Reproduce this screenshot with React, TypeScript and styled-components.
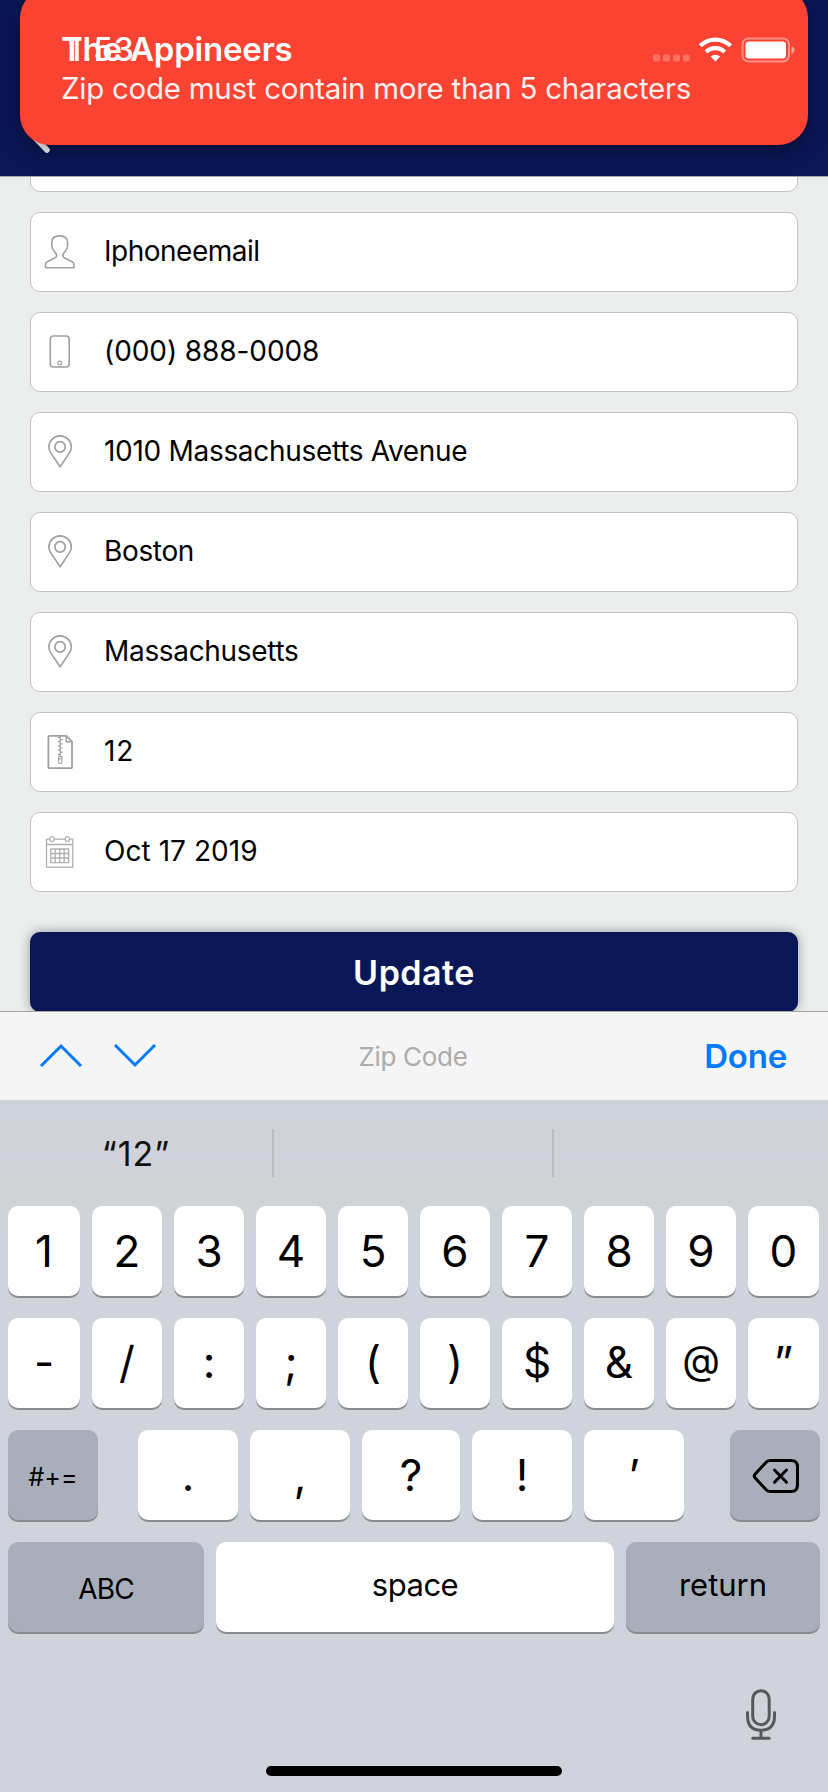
import React from "react";
import styled, { createGlobalStyle } from "styled-components";

const GlobalStyle = createGlobalStyle`
  *, *::before, *::after { box-sizing: border-box; }
  html, body { margin: 0; padding: 0; }
  body { background: #ebeeed; }
`;

const Screen = styled.div`
  position: relative;
  display: flex;
  flex-direction: column;
  width: 828px;
  height: 1792px;
  overflow: hidden;
  background: #ebeeed;
  color: #000;
  font-family: Inter, "Liberation Sans", sans-serif;
`;

/* ---------- Header, toast and status bar ---------- */

const NavBar = styled.header`
  flex: none;
  display: flex;
  align-items: flex-end;
  height: 177px;
  padding: 0 0 20px 24px;
  background: #0a1757;
  border-bottom: 1px solid #a3a6ad;
`;

const Toast = styled.div`
  position: absolute;
  top: -12px;
  left: 20px;
  width: 788px;
  height: 157px;
  padding: 41px 41px 0;
  border-radius: 30px;
  background: #fa4332;
  color: #fff;
  box-shadow: 0 6px 20px rgba(0, 0, 0, 0.4);
`;

const ToastTitle = styled.div`
  font-size: 33px;
  line-height: 40px;
  font-weight: 600;
  letter-spacing: -0.2px;
  white-space: nowrap;
`;

const ToastMessage = styled.div`
  font-size: 29.5px;
  line-height: 38px;
  letter-spacing: -0.27px;
  white-space: nowrap;
  opacity: 0.92;
`;

const StatusBar = styled.div`
  position: absolute;
  top: 0;
  left: 0;
  right: 0;
  display: flex;
  align-items: center;
  justify-content: space-between;
  height: 99px;
  padding: 0 32px 0 68px;
  color: #fff;
`;

const Clock = styled.span`
  font-size: 32px;
  font-weight: 500;
  letter-spacing: 1px;
`;

/* ---------- Form ---------- */

const Form = styled.main`
  flex: none;
  display: flex;
  flex-direction: column;
  gap: 20px;
  height: 834px;
  padding: 0 30px;
  overflow: hidden;
`;

const Field = styled.div<{ $clipped?: boolean }>`
  flex: none;
  display: flex;
  align-items: center;
  height: 80px;
  margin-top: ${(p) => (p.$clipped ? "-65px" : "0")};
  padding-left: 9px;
  background: #fff;
  border: 1px solid #c2c4c4;
  border-radius: 10px;
`;

const FieldIcon = styled.svg`
  flex: none;
  width: 40px;
  height: 40px;
  fill: none;
  stroke: #a0a0a0;
  stroke-width: 1.6;
  stroke-linejoin: round;
`;

const FieldValue = styled.span<{ $tracking: number }>`
  padding: 0 0 2px 24px;
  font-size: 28px;
  line-height: 40px;
  letter-spacing: ${(p) => p.$tracking}px;
  white-space: nowrap;
`;

const UpdateButton = styled.button`
  flex: none;
  height: 80px;
  margin: 20px 0 0;
  padding: 0;
  border: 0;
  border-radius: 10px;
  background: #0a1757;
  color: #fff;
  font-family: inherit;
  font-size: 34px;
  font-weight: 600;
  letter-spacing: 0.5px;
  box-shadow: 0 0 12px rgba(0, 0, 0, 0.36);
`;

/* ---------- Keyboard accessory ---------- */

const Accessory = styled.div`
  flex: none;
  display: grid;
  grid-template-columns: 1fr auto 1fr;
  align-items: center;
  height: 89px;
  padding: 0 41px 0 39px;
  background: #f5f5f5;
  border-top: 1px solid #a0a2a2;
`;

const Arrows = styled.div`
  display: flex;
  gap: 30px;
`;

const AccessoryTitle = styled.span`
  font-size: 26px;
  letter-spacing: -0.3px;
  color: #acacac;
`;

const DoneButton = styled.span`
  justify-self: end;
  font-size: 33px;
  font-weight: 600;
  letter-spacing: -0.2px;
  color: #007aff;
`;

/* ---------- Keyboard ---------- */

const Keyboard = styled.section`
  flex: 1;
  display: flex;
  flex-direction: column;
  background: linear-gradient(
    #ced2da 0, #ced2da 20px, #cfd3d7 34px, #cfd2da 50px, #cfd2da 66px,
    #cfd3d6 84px, #cfd3d6 102px, #d0d3db 130px, #d0d3db 740px
  );
`;

const Suggestions = styled.div`
  display: grid;
  grid-template-columns: 272px 280px 276px;
  align-items: center;
  height: 106px;
  font-size: 34px;
  color: #111;
`;

const Suggestion = styled.div<{ $divided?: boolean }>`
  display: flex;
  align-items: center;
  justify-content: center;
  height: 48px;
  letter-spacing: 1px;
  border-left: ${(p) => (p.$divided ? "2px solid #b7babf" : "0")};
`;

const KeyRow = styled.div<{ $columns: string }>`
  display: grid;
  grid-template-columns: ${(p) => p.$columns};
  column-gap: 12px;
  height: 90px;
  margin: 0 0 22px 8px;
`;

const Key = styled.div<{
  $size?: number;
  $dark?: boolean;
  $lift?: number;
  $drop?: number;
  $column?: number;
  $tracking?: number;
}>`
  display: flex;
  align-items: center;
  justify-content: center;
  grid-column: ${(p) => p.$column ?? "auto"};
  padding-top: ${(p) => p.$drop ?? 0}px;
  padding-bottom: ${(p) => p.$lift ?? 0}px;
  border-radius: 10px;
  background: ${(p) => (p.$dark ? "#a9afba" : "#fff")};
  box-shadow: 0 2px 0 #898b8f;
  font-size: ${(p) => p.$size ?? 44}px;
  letter-spacing: ${(p) => p.$tracking ?? 0}px;
  line-height: 1;
`;

const Dictation = styled.div`
  display: flex;
  justify-content: flex-end;
  padding: 35px 50px 0 0;
`;

const HomeIndicator = styled.div`
  width: 296px;
  height: 10px;
  margin: 25px auto 0;
  border-radius: 5px;
  background: #000;
`;

/* ---------- Icons ---------- */

const PersonIcon = () => (
  <FieldIcon viewBox="0 0 40 40">
    <path d="M19.7 3.9C14.4 3.9 11.8 6.4 11.8 10.4V14.2C11.8 17.6 15.2 20 16.3 22.1C17 23.7 16.3 25.2 14.8 26L7.2 29.8C6 30.5 5.5 31.3 5.5 32.4V35.7H33.9V32.4C33.9 31.3 33.4 30.5 32.2 29.8L24.6 26C23.1 25.2 22.4 23.7 23.1 22.1C24.2 20 27.6 17.6 27.6 14.2V10.4C27.6 6.4 25 3.9 19.7 3.9Z" />
  </FieldIcon>
);

const PhoneIcon = () => (
  <FieldIcon viewBox="0 0 40 40">
    <rect x="10.3" y="4" width="18.9" height="31" rx="3" />
    <circle cx="19.7" cy="31" r="1.9" strokeWidth="1.2" />
  </FieldIcon>
);

const PinIcon = () => (
  <FieldIcon viewBox="0 0 40 40">
    <path d="M20.1 34.8L10.6 20.6C9.4 18.7 8.9 17 8.9 15.1A11.2 11.2 0 0 1 31.3 15.1C31.3 17 30.8 18.7 29.6 20.6Z" />
    <circle cx="20.1" cy="14.9" r="5.2" strokeWidth="1.7" />
  </FieldIcon>
);

const ZipIcon = () => (
  <FieldIcon viewBox="0 0 40 40">
    <path d="M26.4 3.8H9.4Q8.4 3.8 8.4 4.8V35.2Q8.4 36.2 9.4 36.2H31Q32 36.2 32 35.2V9.6Z" strokeWidth="1.8" />
    <path d="M26.2 4V9.8H31.8" strokeWidth="1.4" />
    <path d="M20.2 4V25M17.8 5.5H20.2M20.2 7.6H22.7M17.8 9.7H20.2M20.2 11.8H22.7M17.8 13.9H20.2M20.2 16H22.7M17.8 18.1H20.2M20.2 20.2H22.7M17.8 22.3H20.2" strokeWidth="1.2" />
    <path d="M18.6 24.2H21.8V30.2Q21.8 31.5 20.2 31.5Q18.6 31.5 18.6 30.2ZM18.6 26.8H21.8" strokeWidth="1.1" />
  </FieldIcon>
);

const CalendarIcon = () => (
  <FieldIcon viewBox="0 0 40 40">
    <g stroke="#b0b0b0" strokeWidth="1.3">
      <path d="M10 7.1H6.5V35.2H32.8V7.1H29.4M14 7.1H25.4M6.5 12.5H32.8" />
      <rect x="10" y="4.8" width="4" height="4.6" rx="1.3" />
      <rect x="25.4" y="4.8" width="4" height="4.6" rx="1.3" />
      <path d="M10.8 17H28.7V30.7H10.8ZM10.8 21.5H28.7M10.8 26H28.7M15.2 17V30.7M19.7 17V30.7M24.2 17V30.7" />
    </g>
  </FieldIcon>
);

const BackIcon = () => (
  <svg width="30" height="46" viewBox="0 0 30 46" fill="none" stroke="#fff" strokeWidth="5.5" strokeLinecap="round" strokeLinejoin="round">
    <path d="M23 7L7 23.5L23 40" />
  </svg>
);

const StatusIcons = () => (
  <svg width="143" height="26" viewBox="0 0 143 26" fill="none">
    <g fill="#fff" fillOpacity="0.25">
      <rect x="0" y="17.5" width="7" height="7" rx="2" />
      <rect x="10" y="17.5" width="7" height="7" rx="2" />
      <rect x="20" y="17.5" width="7" height="7" rx="2" />
      <rect x="30" y="17.5" width="7" height="7" rx="2" />
    </g>
    <g stroke="#fff" strokeWidth="4.3">
      <path d="M47.2 8.7A21.8 21.8 0 0 1 77.6 8.7" />
      <path d="M53.1 15A13.3 13.3 0 0 1 71.7 15" />
    </g>
    <path d="M62.4 24.5L57.6 19.6A6.9 6.9 0 0 1 67.2 19.6Z" fill="#fff" />
    <rect x="89.5" y="1.5" width="46.500" height="23" rx="6" stroke="#fff" strokeOpacity="0.42" strokeWidth="2" />
    <rect x="92.5" y="4.5" width="40.5" height="17" rx="3.2" fill="#fff" />
    <path d="M138.5 9.2Q141.500 10.3 141.500 13Q141.500 15.7 138.500 16.8Z" fill="#fff" fillOpacity="0.5" />
  </svg>
);

const ChevronIcon = ({ up }: { up?: boolean }) => (
  <svg width="44" height="26" viewBox="0 0 44 26" fill="none" stroke="#007aff" strokeWidth="3">
    <path d={up ? "M2 23L22 3L42 23" : "M2 2L22 22L42 2"} />
  </svg>
);

const BackspaceIcon = () => (
  <svg width="50" height="38" viewBox="0 0 50 38" fill="none" stroke="#000" strokeWidth="3" strokeLinejoin="round" strokeLinecap="round">
    <g transform="translate(2 2)">
      <path d="M18.5 2.5H39Q45.500 2.5 45.500 9V27Q45.500 33.500 39 33.500H18.500Q16 33.500 14.200 31.800L3 19.800Q1.500 18 3 16.200L14.200 4.200Q16 2.500 18.500 2.500Z" />
      <path d="M22.500 12L34.500 24.300M34.500 12L22.500 24.300" />
    </g>
  </svg>
);

const MicIcon = () => (
  <svg width="34" height="52" viewBox="0 0 34 52" fill="none" stroke="#55585f" strokeWidth="3" strokeLinecap="round">
    <rect x="8.7" y="1.7" width="16.5" height="34" rx="8.25" />
    <path d="M3.500 23.500V27Q3.500 41.200 16.950 41.200Q30.500 41.200 30.500 27V23.500M16.950 41.200V49M8.700 49.300H25.200" />
  </svg>
);

/* ---------- Page ---------- */

const fields = [
  { icon: <PersonIcon />, value: "Iphoneemail", tracking: -0.5 },
  { icon: <PhoneIcon />, value: "(000) 888-0008", tracking: -0.08 },
  { icon: <PinIcon />, value: "1010 Massachusetts Avenue", tracking: -0.3 },
  { icon: <PinIcon />, value: "Boston", tracking: -0.35 },
  { icon: <PinIcon />, value: "Massachusetts", tracking: -0.32 },
  { icon: <ZipIcon />, value: "12", tracking: 0.8 },
  { icon: <CalendarIcon />, value: "Oct 17 2019", tracking: 0.05 },
];

const tenKeys = "72px repeat(8, 70px) 71px";

const App = () => (
  <>
    <GlobalStyle />
    <Screen>
      <NavBar>
        <BackIcon />
      </NavBar>

      <Form>
        <Field $clipped />
        {fields.map((f) => (
          <Field key={f.value}>
            {f.icon}
            <FieldValue $tracking={f.tracking}>{f.value}</FieldValue>
          </Field>
        ))}
        <UpdateButton>Update</UpdateButton>
      </Form>

      <Accessory>
        <Arrows>
          <ChevronIcon up />
          <ChevronIcon />
        </Arrows>
        <AccessoryTitle>Zip Code</AccessoryTitle>
        <DoneButton>Done</DoneButton>
      </Accessory>

      <Keyboard>
        <Suggestions>
          <Suggestion>“12”</Suggestion>
          <Suggestion $divided />
          <Suggestion $divided />
        </Suggestions>
        <KeyRow $columns={tenKeys}>
          {[..."1234567890"].map((k) => (
            <Key key={k}>{k}</Key>
          ))}
        </KeyRow>
        <KeyRow $columns={tenKeys}>
          {[..."-/:;()$&"].map((k) => (
            <Key key={k} $lift={2}>{k}</Key>
          ))}
          <Key $size={39} $lift={8}>@</Key>
          <Key $lift={2}>”</Key>
        </KeyRow>
        <KeyRow $columns="90px 16px 100px 100px 98px 100px 100px 22px 90px">
          <Key $dark $size={25} $drop={4}>#+=</Key>
          <Key $column={3}>.</Key>
          <Key>,</Key>
          <Key>?</Key>
          <Key>!</Key>
          <Key>’</Key>
          <Key $dark $column={9}>
            <BackspaceIcon />
          </Key>
        </KeyRow>
        <KeyRow $columns="196px 398px 194px">
          <Key $dark $size={28} $drop={3} $tracking={-0.8}>ABC</Key>
          <Key $size={31} $lift={6} $tracking={-0.5}>space</Key>
          <Key $dark $size={31} $lift={6}>return</Key>
        </KeyRow>
        <Dictation>
          <MicIcon />
        </Dictation>
        <HomeIndicator />
      </Keyboard>

      <Toast>
        <ToastTitle>The Appineers</ToastTitle>
        <ToastMessage>Zip code must contain more than 5 characters</ToastMessage>
      </Toast>

      <StatusBar>
        <Clock>1:53</Clock>
        <StatusIcons />
      </StatusBar>
    </Screen>
  </>
);

export default App;
